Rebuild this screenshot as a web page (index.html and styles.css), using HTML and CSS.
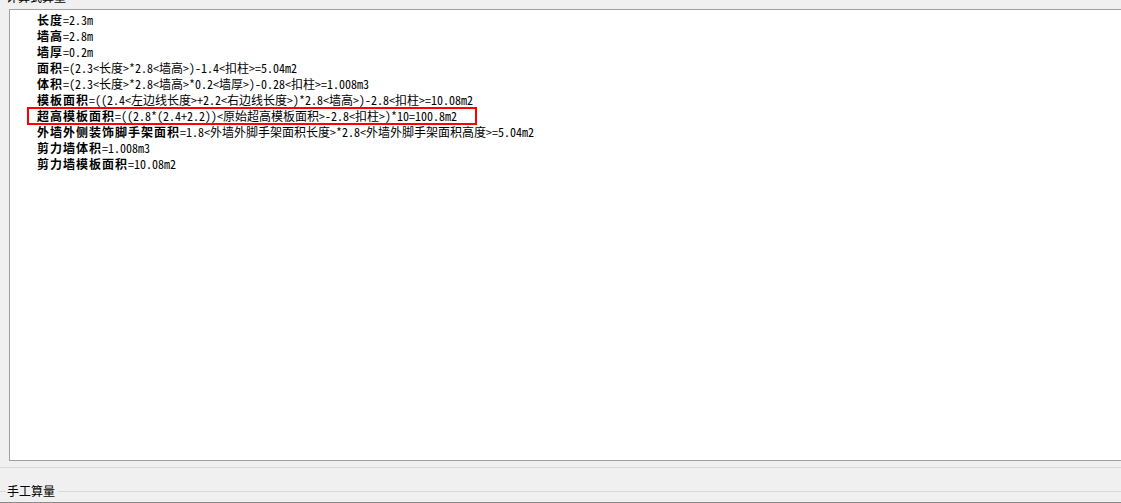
FILE: index.html
```html
<!DOCTYPE html>
<html lang="zh-CN">
<head>
<meta charset="utf-8">
<title>计算式算量</title>
<link rel="stylesheet" href="styles.css">
</head>
<body>
<div class="page">
  <div class="group-title"><span class="title-text">计算式算量</span></div>
  <div class="box">
    <div class="row"><span class="k">长度</span><span class="v">=2.3m</span></div>
    <div class="row"><span class="k">墙高</span><span class="v">=2.8m</span></div>
    <div class="row"><span class="k">墙厚</span><span class="v">=0.2m</span></div>
    <div class="row"><span class="k">面积</span><span class="v">=(2.3&lt;长度&gt;*2.8&lt;墙高&gt;)-1.4&lt;扣柱&gt;=5.04m2</span></div>
    <div class="row"><span class="k">体积</span><span class="v">=(2.3&lt;长度&gt;*2.8&lt;墙高&gt;*0.2&lt;墙厚&gt;)-0.28&lt;扣柱&gt;=1.008m3</span></div>
    <div class="row"><span class="k">模板面积</span><span class="v">=((2.4&lt;左边线长度&gt;+2.2&lt;右边线长度&gt;)*2.8&lt;墙高&gt;)-2.8&lt;扣柱&gt;=10.08m2</span></div>
    <div class="row hl"><span class="k">超高模板面积</span><span class="v">=((2.8*(2.4+2.2))&lt;原始超高模板面积&gt;-2.8&lt;扣柱&gt;)*10=100.8m2</span></div>
    <div class="row"><span class="k">外墙外侧装饰脚手架面积</span><span class="v">=1.8&lt;外墙外脚手架面积长度&gt;*2.8&lt;外墙外脚手架面积高度&gt;=5.04m2</span></div>
    <div class="row"><span class="k">剪力墙体积</span><span class="v">=1.008m3</span></div>
    <div class="row"><span class="k">剪力墙模板面积</span><span class="v">=10.08m2</span></div>
  </div>
  <div class="divider"></div>
  <div class="legend">
    <span class="seg seg-left"></span>
    <span class="legend-text">手工算量</span>
    <span class="seg seg-right"></span>
  </div>
  <div class="bottom-line"></div>
</div>
</body>
</html>
```

FILE: styles.css
```css
html, body {
  margin: 0;
  padding: 0;
  background: #f0f0f0;
}

body {
  font-family: "Noto Sans CJK SC", "Liberation Sans", sans-serif;
  font-size: 12px;
  color: #000;
  overflow: hidden;
}

.page {
  width: 1121px;
  height: 503px;
  display: flex;
  flex-direction: column;
}

.group-title {
  height: 9px;
  overflow: hidden;
  padding-left: 6px;
}

.title-text {
  display: block;
  line-height: 16px;
  margin-top: -11px;
}

.box {
  margin-left: 9px;
  height: 450px;
  background: #fff;
  border-top: 1px solid #a0a0a0;
  border-left: 1px solid #a0a0a0;
  border-bottom: 1px solid #a0a0a0;
  padding: 2px 0 0 27px;
  box-sizing: content-box;
  height: 448px;
}

.row {
  height: 16px;
  line-height: 16px;
  white-space: nowrap;
  display: flex;
  align-items: center;
}

.k {
  font-family: "Noto Sans CJK SC", sans-serif;
  font-weight: 700;
  font-size: 12px;
  letter-spacing: 1px;
}

.v {
  font-family: "Noto Sans Mono CJK SC", "Liberation Mono", "Noto Sans CJK SC", monospace;
  font-size: 12px;
}

.hl {
  position: relative;
}

.hl::after {
  content: "";
  position: absolute;
  left: -10px;
  top: -1px;
  width: 450px;
  height: 18px;
  border: 2px solid #ff0000;
  box-sizing: border-box;
}

.divider {
  margin-top: 6px;
  height: 1px;
  background: #dadada;
}

.legend {
  margin-top: 15px;
  height: 16px;
  display: flex;
  align-items: center;
}

.seg {
  height: 1px;
  background: #dadada;
}

.seg-left {
  width: 6px;
}

.seg-right {
  flex: 1;
}

.legend-text {
  line-height: 16px;
  padding: 0 3px 0 1px;
}

.bottom-line {
  margin-top: 3px;
  height: 1px;
  background: #8a8a8a;
}
```
